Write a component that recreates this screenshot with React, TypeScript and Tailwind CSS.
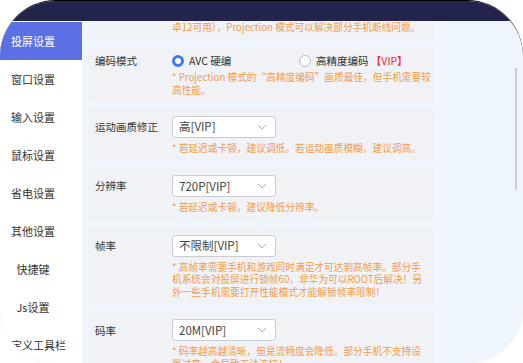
import React from "react";

const menu = [
    "投屏设置",
    "窗口设置",
    "输入设置",
    "鼠标设置",
    "省电设置",
    "其他设置",
    "快捷键",
    "Js设置",
    "自定义工具栏",
];

function Chevron() {
    return (
        <svg width="10" height="6" viewBox="0 0 10 6" fill="none">
            <polyline points="1,1 5,5 9,1" stroke="#a8abb2" strokeWidth="1" />
        </svg>
    );
}

function Select({ value }: { value: string }) {
    return (
        <div className="flex h-[22px] w-[104px] items-center justify-between rounded-[3px] border border-[#c8cbd1] bg-white pl-[6px] pr-[8px] text-[11.5px] text-[#444]">
            <span>{value}</span>
            <Chevron />
        </div>
    );
}

function Note({ lines }: { lines: string[] }) {
    return (
        <div className="mt-[4px] whitespace-nowrap text-[9.7px] leading-[12.8px] text-[#f39c4a]">
            {lines.map((l, i) => (
                <div key={i}>{l}</div>
            ))}
        </div>
    );
}

function SelectCard({ label, value, lines }: { label: string; value: string; lines: string[] }) {
    return (
        <div className="flex rounded-[4px] bg-[#f0f2f5] px-[7px] pb-[6px] pt-[7px]">
            <div className="flex h-[22px] w-[77px] shrink-0 items-center text-[10.5px] text-[#333]">{label}</div>
            <div className="flex flex-col">
                <Select value={value} />
                <Note lines={lines} />
            </div>
        </div>
    );
}

function Radio({ checked, children }: { checked?: boolean; children: React.ReactNode }) {
    return (
        <div className="flex w-[127px] items-center gap-[5px] text-[10.5px] text-[#333]">
            {checked ? (
                <span className="h-[12px] w-[12px] rounded-full border-[3.5px] border-[#3a7cf4] bg-white" />
            ) : (
                <span className="h-[12px] w-[12px] rounded-full border border-[#b9bcc2] bg-white" />
            )}
            <span>{children}</span>
        </div>
    );
}

export default function App() {
    return (
        <div className="h-[363px] w-[523px] bg-white font-['Noto_Sans_CJK_SC',sans-serif]">
            <div className="flex h-full w-full flex-col overflow-hidden rounded-[56px] border-t border-black bg-[#eef5fd] shadow-[0_0_3px_rgba(0,0,0,0.08)]">
                {/* title bar */}
                <div className="h-[20px] shrink-0 bg-[#22244b]" />

                <div className="flex min-h-0 flex-1">
                    {/* sidebar */}
                    <aside className="w-[82px] shrink-0 bg-white pt-[1px]">
                        {menu.map((m, i) => (
                            <div
                                key={m}
                                className={
                                    i === 0
                                        ? "flex h-[38px] items-center justify-center bg-[#5c70e6] pr-[16px] text-[11px] text-white"
                                        : "flex h-[38px] items-center justify-center whitespace-nowrap pr-[16px] text-[11px] text-[#333]"
                                }
                            >
                                {m}
                            </div>
                        ))}
                    </aside>

                    {/* settings */}
                    <main className="relative min-w-0 flex-1 overflow-hidden pl-[6px]">
                        <div className="flex w-[346px] flex-col gap-[7.5px]">
                            {/* tail of the 投屏模式 card, scrolled up */}
                            <div className="-mt-[20px] rounded-[4px] bg-[#f0f2f5] pb-[6px] pl-[84px] pt-[20px]">
                                <div className="whitespace-nowrap text-[9.7px] leading-[12.5px] text-[#f39c4a]">
                                    卓12可用），Projection 模式可以解决部分手机断线问题。
                                </div>
                            </div>

                            {/* 编码模式 */}
                            <div className="flex rounded-[4px] bg-[#f0f2f5] px-[7px] py-[5.5px]">
                                <div className="flex h-[16px] w-[77px] shrink-0 items-center text-[10.5px] text-[#333]">
                                    编码模式
                                </div>
                                <div className="flex flex-col">
                                    <div className="flex h-[16px] items-center">
                                        <Radio checked>AVC 硬编</Radio>
                                        <Radio>
                                            高精度编码 <span className="text-[#f0262d]">【VIP】</span>
                                        </Radio>
                                    </div>
                                    <div className="mt-[2.5px] whitespace-nowrap text-[9.7px] leading-[12.5px] text-[#f39c4a]">
                                        <div>* Projection 模式的“高精度编码”画质最佳，但手机需要较</div>
                                        <div>高性能。</div>
                                    </div>
                                </div>
                            </div>

                            <SelectCard
                                label="运动画质修正"
                                value="高[VIP]"
                                lines={["* 若延迟或卡顿，建议调低。若运动画质模糊，建议调高。"]}
                            />

                            <SelectCard label="分辨率" value="720P[VIP]" lines={["* 若延迟或卡顿，建议降低分辨率。"]} />

                            <SelectCard
                                label="帧率"
                                value="不限制[VIP]"
                                lines={[
                                    "* 高帧率需要手机和游戏同时满足才可达到高帧率。部分手",
                                    "机系统会对投屏进行锁帧60，非华为可以ROOT后解决！另",
                                    "外一些手机需要打开性能模式才能解锁帧率限制！",
                                ]}
                            />

                            <SelectCard
                                label="码率"
                                value="20M[VIP]"
                                lines={["* 码率越高越清晰，但是流畅度会降低。部分手机不支持设", "置过高，会导致无法连接！"]}
                            />
                        </div>

                        {/* scrollbar thumb */}
                        <div className="absolute right-[6px] top-[47px] h-[122px] w-[2px] bg-[#c9ccd1]" />
                    </main>
                </div>
            </div>
        </div>
    );
}
